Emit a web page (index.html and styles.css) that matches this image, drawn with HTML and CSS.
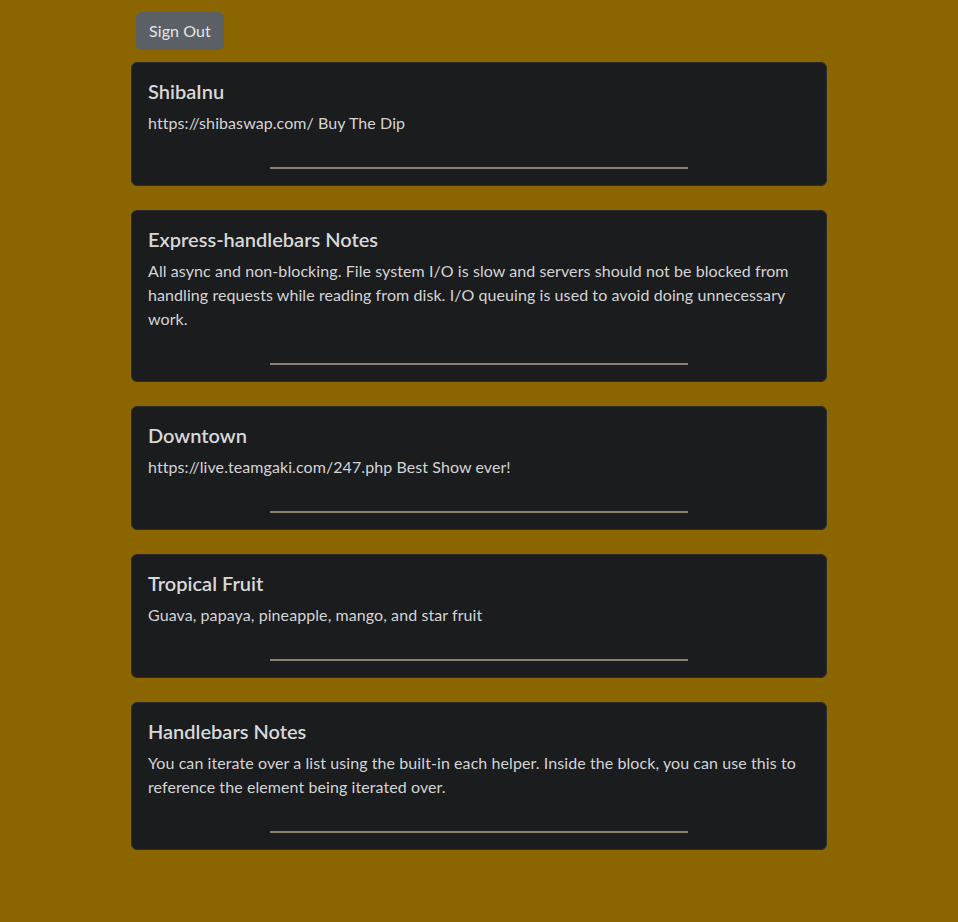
FILE: index.html
```html
<!DOCTYPE html>
<html lang="en">
<head>
<meta charset="utf-8">
<title>Notes</title>
<link rel="stylesheet" href="styles.css">
</head>
<body>
<div class="container">
  <button class="btn">Sign Out</button>
  <div class="card">
    <div class="card-body">
      <h5 class="card-title">ShibaInu</h5>
      <p class="card-text">https://shibaswap.com/ Buy The Dip</p>
      <hr class="divider">
    </div>
  </div>
  <div class="card">
    <div class="card-body">
      <h5 class="card-title">Express-handlebars Notes</h5>
      <p class="card-text">All async and non-blocking. File system I/O is slow and servers should not be blocked from handling requests while reading from disk. I/O queuing is used to avoid doing unnecessary work.</p>
      <hr class="divider">
    </div>
  </div>
  <div class="card">
    <div class="card-body">
      <h5 class="card-title">Downtown</h5>
      <p class="card-text">https://live.teamgaki.com/247.php Best Show ever!</p>
      <hr class="divider">
    </div>
  </div>
  <div class="card">
    <div class="card-body">
      <h5 class="card-title">Tropical Fruit</h5>
      <p class="card-text">Guava, papaya, pineapple, mango, and star fruit</p>
      <hr class="divider">
    </div>
  </div>
  <div class="card">
    <div class="card-body">
      <h5 class="card-title">Handlebars Notes</h5>
      <p class="card-text">You can iterate over a list using the built-in each helper. Inside the block, you can use this to reference the element being iterated over.</p>
      <hr class="divider">
    </div>
  </div>
</div>
</body>
</html>
```
FILE: styles.css
```css
html, body {
  margin: 0;
  padding: 0;
}
body {
  background: #8b6500;
  font-family: "Segoe UI", Lato, "Liberation Sans", sans-serif;
  font-size: 16px;
  line-height: 1.5;
  color: #d4d4d4;
  min-height: 922px;
}
.container {
  width: 696px;
  margin: 0 auto;
  padding: 0 12px;
}
.btn {
  display: block;
  margin: 12px 0 12px 5px;
  padding: 6px 12px;
  font-family: inherit;
  font-size: 16px;
  line-height: 24px;
  letter-spacing: 0.1px;
  color: #e6e6e6;
  background: #5a6065;
  border: 1px solid #5a6065;
  border-radius: 6px;
}
.card {
  background: #1b1c1e;
  border: 1px solid #2c2d30;
  border-radius: 6px;
  margin-bottom: 24px;
}
.card-body {
  padding: 16px;
}
.card-title {
  margin: 0 0 8px;
  font-size: 20px;
  font-weight: 600;
  line-height: 24px;
  color: #d8d8d8;
}
.card-text {
  margin: 0;
  letter-spacing: 0.08px;
}
.divider {
  width: 418px;
  margin: 32px auto 0;
  border: 0;
  border-top: 2px solid #8d8173;
  height: 0;
}
```
